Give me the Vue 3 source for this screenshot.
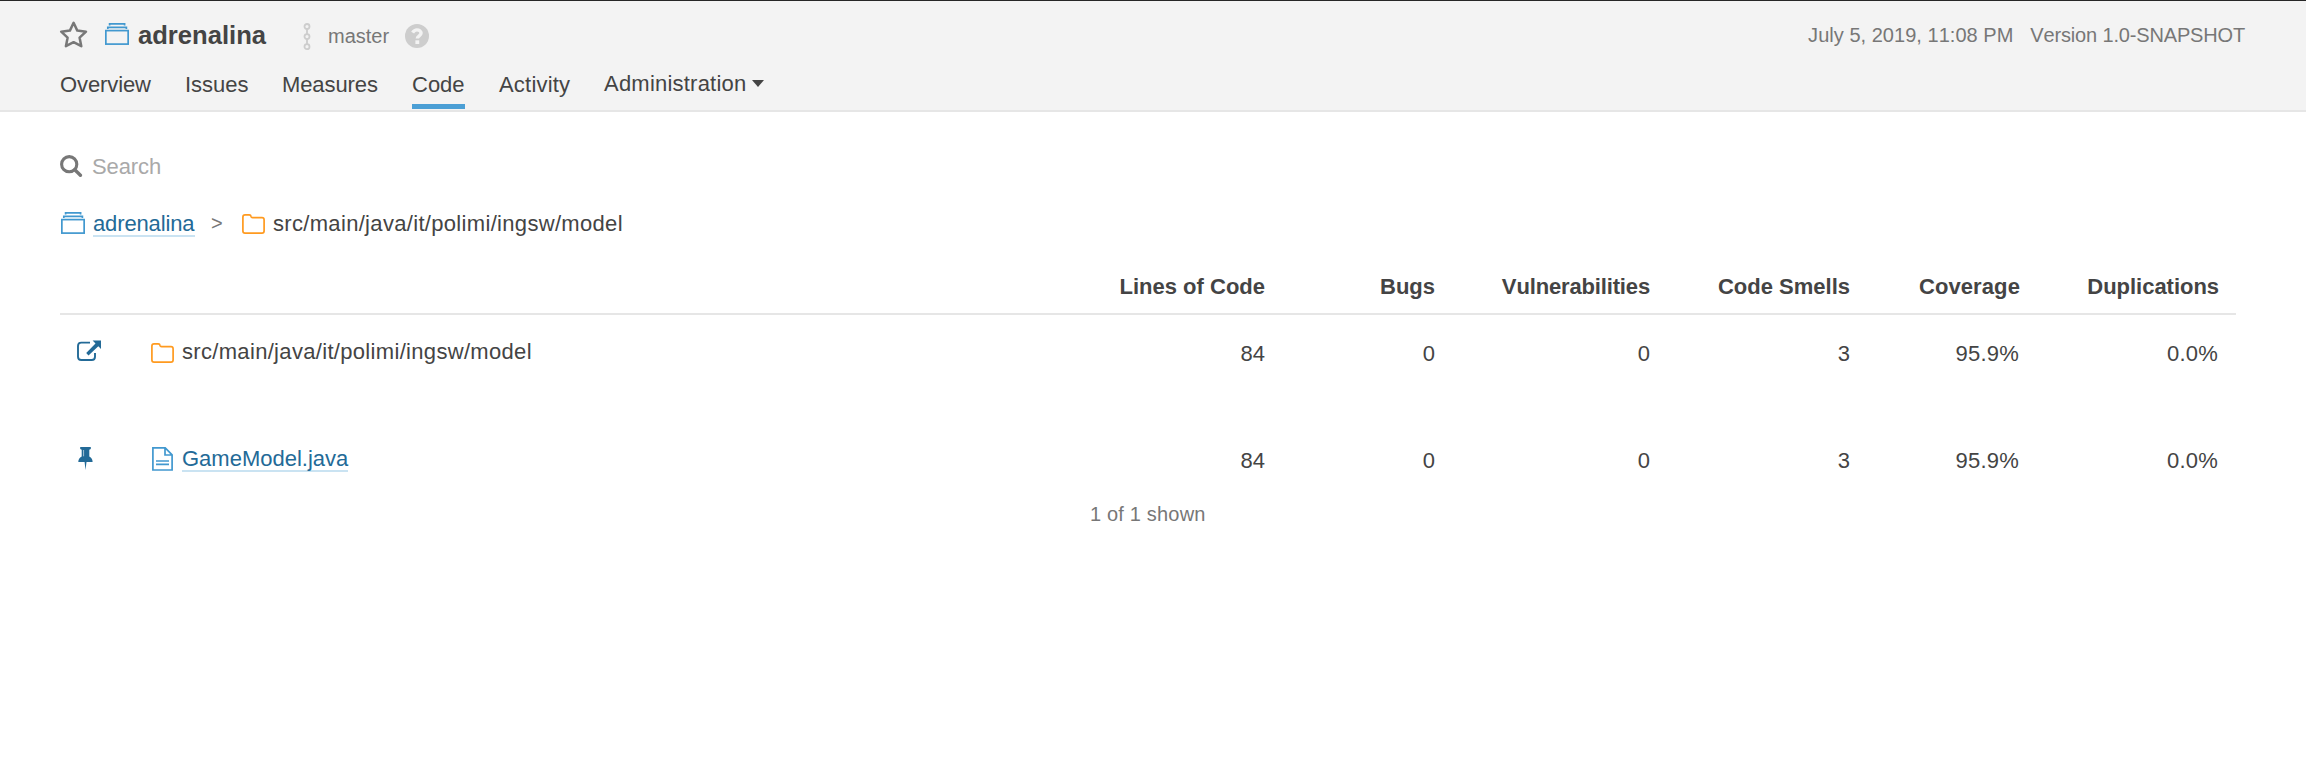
<script setup>
const tabs = [
  { name: 'Overview', cls: 'overview' },
  { name: 'Issues', cls: 'issues' },
  { name: 'Measures', cls: 'measures' },
  { name: 'Code', cls: 'code active' },
  { name: 'Activity', cls: 'activity' },
]
const columns = [
  { label: 'Lines of Code', cls: 'ncloc' },
  { label: 'Bugs', cls: 'bugs' },
  { label: 'Vulnerabilities', cls: 'vulnerabilities' },
  { label: 'Code Smells', cls: 'smells' },
  { label: 'Coverage', cls: 'coverage' },
  { label: 'Duplications', cls: 'duplications' },
]
const rows = [
  { kind: 'dir', name: 'src/main/java/it/polimi/ingsw/model', values: ['84', '0', '0', '3', '95.9%', '0.0%'] },
  { kind: 'file', name: 'GameModel.java', values: ['84', '0', '0', '3', '95.9%', '0.0%'] },
]
</script>

<template>
  <div class="page">
    <header class="header">
      <div class="context">
        <svg class="star" width="29" height="27" viewBox="0 0 29 27">
          <path d="M14.6 1.8 L18.3 9.6 27 10.7 20.6 16.7 22.3 25.2 14.6 21.2 6.9 25.2 8.6 16.7 2.2 10.7 10.9 9.6 Z" fill="none" stroke="#777" stroke-width="2.5" stroke-linejoin="round" />
        </svg>
        <svg class="project-icon" width="24" height="22" viewBox="0 0 24 22">
          <g fill="none" stroke="#4198cf" stroke-width="1.7">
            <path d="M4.6 2.6V.9H19.6V2.6M2.8 6V4.4H21.4V6" />
            <rect x=".85" y="7.6" width="22.3" height="13.5" />
          </g>
        </svg>
        <h1 class="title">adrenalina</h1>
        <svg class="branch-icon" width="8" height="28" viewBox="0 0 8 28">
          <g fill="none" stroke="#cdcdcd" stroke-width="1.8">
            <circle cx="4" cy="3.5" r="2.5" /><circle cx="4" cy="13.6" r="2.5" /><circle cx="4" cy="23.7" r="2.5" />
            <path d="M4 6V11.1M4 16.1V21.2" />
          </g>
        </svg>
        <span class="branch">master</span>
        <svg class="help" width="24" height="24" viewBox="0 0 24 24">
          <circle cx="12" cy="12" r="12" fill="#cdcdcd" />
          <path d="M7.6 8.6C8.8 6.6 10.2 5.9 12 5.9c2.2 0 4.1 1.3 4.1 3.2 0 2.8-3.8 2.6-3.8 5.5" fill="none" stroke="#f3f3f3" stroke-width="3.4" />
          <rect x="10.4" y="16.3" width="3.8" height="3.7" fill="#f3f3f3" />
        </svg>
        <div class="meta">
          <span class="date">July 5, 2019, 11:08 PM</span>
          <span class="version">Version 1.0-SNAPSHOT</span>
        </div>
      </div>
      <nav class="tabs">
        <a v-for="t in tabs" :key="t.name" class="tab" :class="t.cls">{{ t.name }}</a>
        <a class="tab admin">Administration<i class="caret"></i></a>
      </nav>
    </header>

    <main class="content">
      <div class="search">
        <svg width="23" height="22" viewBox="0 0 23 22">
          <circle cx="9.2" cy="9.2" r="7.6" fill="none" stroke="#777" stroke-width="3.1" />
          <path d="M14.8 14.8L20.4 20.2" stroke="#777" stroke-width="3.4" stroke-linecap="round" />
        </svg>
        <span>Search</span>
      </div>

      <div class="crumbs">
        <svg class="crumb-project" width="24" height="22" viewBox="0 0 24 22">
          <g fill="none" stroke="#4198cf" stroke-width="1.7">
            <path d="M4.6 2.6V.9H19.6V2.6M2.8 6V4.4H21.4V6" />
            <rect x=".85" y="7.6" width="22.3" height="13.5" />
          </g>
        </svg>
        <a class="link crumb-link">adrenalina</a>
        <span class="sep">&gt;</span>
        <svg class="crumb-folder" width="23" height="20" viewBox="0 0 23 20">
          <path d="M.9 3Q.9.9 3 .9H7.3Q8.8.9 9 2.4 9.2 3.6 10.5 3.6H20Q22.1 3.6 22.1 5.7V17Q22.1 19.1 20 19.1H3Q.9 19.1.9 17Z" fill="none" stroke="#ff9a1f" stroke-width="1.7" />
        </svg>
        <span class="path">src/main/java/it/polimi/ingsw/model</span>
      </div>

      <div class="table">
        <div class="row head">
          <span v-for="c in columns" :key="c.label" class="cell" :class="c.cls">{{ c.label }}</span>
        </div>
        <div v-for="r in rows" :key="r.name" class="row" :class="r.kind">
          <div class="name">
            <template v-if="r.kind === 'dir'">
              <svg class="open" width="24" height="22" viewBox="0 0 24 22">
                <path d="M13 2.6H4.3Q1 2.6 1 5.9V16.7Q1 20 4.3 20H14.7Q18 20 18 16.7V13" fill="none" stroke="#236a97" stroke-width="1.9" />
                <path d="M15.6.5H24V8.9L21.3 6.2 11.5 15.4 9.2 13.1 18.5 3.4Z" fill="#236a97" />
              </svg>
              <svg class="icon" width="23" height="20" viewBox="0 0 23 20">
                <path d="M.9 3Q.9.9 3 .9H7.3Q8.8.9 9 2.4 9.2 3.6 10.5 3.6H20Q22.1 3.6 22.1 5.7V17Q22.1 19.1 20 19.1H3Q.9 19.1.9 17Z" fill="none" stroke="#ff9a1f" stroke-width="1.7" />
              </svg>
              <span class="path">{{ r.name }}</span>
            </template>
            <template v-else>
              <svg class="pin" width="15" height="23" viewBox="0 0 15 23">
                <path d="M2.2 0H12.8V2L11.3 2.8V9.4Q14.6 11.3 14.6 15H8.5L7.5 23 6.6 15H.3Q.3 11.3 3.7 9.4V2.8L2.2 2Z" fill="#236a97" />
                <path d="M5.6 3V9.3" stroke="#b5cddc" stroke-width=".9" />
              </svg>
              <svg class="icon" width="21" height="24" viewBox="0 0 21 24">
                <path d="M.9.9H13.2L20.1 7.8V23H.9ZM13 1V8H20M4 14H17M4 17.4H17" fill="none" stroke="#4198cf" stroke-width="1.7" />
              </svg>
              <a class="link">{{ r.name }}</a>
            </template>
          </div>
          <span v-for="(v, i) in r.values" :key="i" class="cell" :class="columns[i].cls">{{ v }}</span>
        </div>
      </div>
      <div class="shown">1 of 1 shown</div>
    </main>
  </div>
</template>

<style>
body { background: #fff; }
</style>

<style scoped>
.page { width: 2306px; height: 758px; background: #fff; color: #444; font: 22px/25px "Liberation Sans", Arial, sans-serif; font-kerning: none; overflow: hidden; }
svg { display: block; flex: none; }
.header { box-sizing: border-box; height: 112px; padding: 0 61px 0 60px; background: #f3f3f3; border-top: 1px solid #262626; border-bottom: 2px solid #e6e6e6; }
.context { display: flex; align-items: flex-start; height: 71px; white-space: nowrap; }
.star { margin: 20px 0 0 -1px; }
.project-icon { margin: 22px 0 0 17px; }
.title { margin: 20px 0 0 9px; width: 165px; font-size: 25.6px; line-height: 28px; font-weight: 700; }
.branch-icon { margin-top: 22px; }
.branch { width: 77px; margin: 24px 0 0 17px; font-size: 20px; line-height: 22px; color: #777; }
.help { margin: 23px 0 0 0; }
.meta { display: flex; gap: 17px; margin: 23px 0 0 auto; font-size: 20px; line-height: 22px; color: #777; }
.date { letter-spacing: .03px; }
.version { letter-spacing: -.16px; }
.tabs { display: flex; gap: 34px; }
.tab { box-sizing: border-box; height: 37px; border-bottom: 5px solid transparent; white-space: nowrap; }
.tab.active { border-color: #4b9fd5; }
.overview { width: 91px; letter-spacing: -.1px; }
.issues { width: 63px; }
.measures { width: 96px; letter-spacing: -.1px; }
.code { width: 53px; }
.activity { width: 71px; letter-spacing: .2px; }
.admin { display: flex; margin-top: -1px; letter-spacing: .22px; }
.caret { width: 0; height: 0; margin: 9px 0 0 6px; border: 6.5px solid transparent; border-top: 7.5px solid #444; border-bottom: 0; }
.content { padding: 42px 70px 0 60px; }
.search { display: flex; height: 58px; gap: 9px; color: #a9a9a9; }
.search svg { margin-top: 1px; }
.search span { line-height: 25px; letter-spacing: -.1px; }
.crumbs { display: flex; align-items: flex-start; height: 25px; white-space: nowrap; }
.crumb-project { margin: 0 8px 0 1px; }
.link { height: 24px; border-bottom: 2px solid #cae3f2; color: #236a97; }
.crumb-link { width: 102px; height: 23px; line-height: 23px; letter-spacing: -.13px; }
.sep { width: 31px; margin: -1px 0 0 16px; font-size: 20px; color: #777; }
.crumb-folder { margin: 2px 8px 0 0; }
.path { letter-spacing: .32px; white-space: nowrap; }
.crumbs .path { margin-top: -1px; }
.table { margin-top: 35px; }
.row { display: grid; grid-template-columns: 1fr 170px 170px 215px 200px 170px 199px; padding-right: 17px; height: 107px; }
.row .cell { text-align: right; padding-top: 26px; }
.head { height: 41px; border-bottom: 2px solid #e6e6e6; font-weight: 700; white-space: nowrap; }
.head .ncloc { grid-column: 2; }
.row.head .cell { padding-top: 2px; }
.name { display: flex; align-items: flex-start; padding-top: 24px; }
.open { margin: 1px 49px 0 17px; }
.dir .icon { margin: 4px 8px 0 1px; }
.pin { margin: 1px 59px 0 18px; }
.file .icon { margin: 1px 9px 0 0; }
.row .coverage, .row .duplications { letter-spacing: .2px; padding-right: 1px; }
.head .smells { letter-spacing: 0; }
.head .vulnerabilities { letter-spacing: -.15px; }
.row.head .coverage { letter-spacing: .1px; padding-right: 0; }
.row.head .duplications { letter-spacing: -.03px; padding-right: 0; }
.shown { margin: -26px 0 0 1030px; font-size: 20px; line-height: 22px; letter-spacing: .18px; color: #777; }
</style>
